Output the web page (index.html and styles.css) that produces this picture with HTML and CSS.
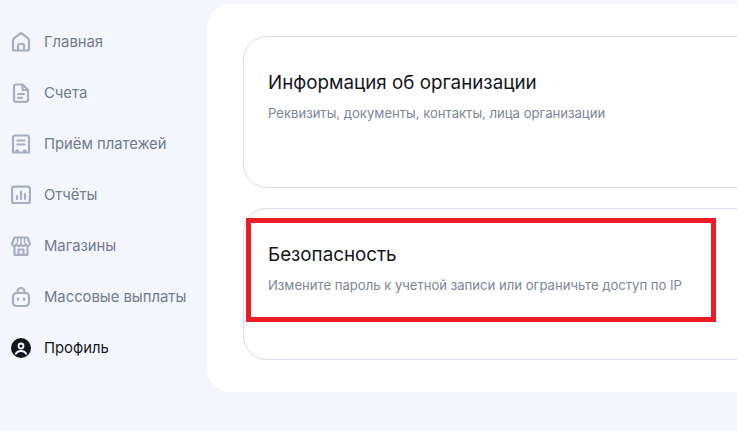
FILE: index.html
```html
<!DOCTYPE html>
<html lang="ru">

<head>
    <meta charset="UTF-8">
    <meta name="viewport" content="width=device-width, initial-scale=1.0">
    <title>Профиль</title>
    <link rel="stylesheet" href="styles.css">
</head>

<body>
    <div class="page">
        <nav class="sidebar">
            <a class="nav-item">
                <svg class="nav-icon" viewBox="0 0 20 20" fill="none" stroke="currentColor" stroke-width="2.2" stroke-linejoin="round">
                    <path d="M2 8.500C2 7.500 2.500 6.800 3.200 6.200L8 2.300a3.200 3.200 0 0 1 4 0l4.800 3.900c.7.600 1.200 1.300 1.200 2.300V17a1.500 1.500 0 0 1-1.500 1.500h-13A1.500 1.500 0 0 1 2 17z" />
                    <path d="M7 18.500V13.500a1.500 1.500 0 0 1 1.500-1.500h3a1.500 1.500 0 0 1 1.500 1.500v5" />
                </svg>
                <span>Главная</span>
            </a>
            <a class="nav-item">
                <svg class="nav-icon" viewBox="0 0 20 20" fill="none" stroke="currentColor" stroke-width="2.200" stroke-linejoin="round" stroke-linecap="round">
                    <path d="M4.500 1.500h7l5.500 5.500v10a1.800 1.800 0 0 1-1.800 1.800H4.800A1.800 1.800 0 0 1 3 17V3a1.500 1.500 0 0 1 1.500-1.500z" />
                    <path d="M11.500 2v5h5" />
                    <path d="M7 11h6M7 14.800h4" />
                </svg>
                <span>Счета</span>
            </a>
            <a class="nav-item">
                <svg class="nav-icon" viewBox="0 0 20 20" fill="none" stroke="currentColor" stroke-width="2.200" stroke-linejoin="round" stroke-linecap="round">
                    <path d="M3.800 1.500h12.400A1.800 1.800 0 0 1 18 3.300v15.200h-3.500v-2h-1.500v2H7v-2H5.500v2H2V3.300a1.800 1.800 0 0 1 1.800-1.800z" />
                    <path d="M6.500 6.500h7M6.500 10.500h7" />
                </svg>
                <span>Приём платежей</span>
            </a>
            <a class="nav-item">
                <svg class="nav-icon" viewBox="0 0 20 20" fill="none" stroke="currentColor" stroke-width="2.200" stroke-linecap="round">
                    <rect x="1.100" y="1.600" width="17.800" height="16.400" rx="1.800" />
                    <path d="M6 14v-3M10 14V6.500M14 14V9" />
                </svg>
                <span>Отчёты</span>
            </a>
            <a class="nav-item">
                <svg class="nav-icon" viewBox="0 0 20 20" fill="none" stroke="currentColor" stroke-width="2.200" stroke-linejoin="round">
                    <path d="M3.500 1.500h13L19 8a2.300 2.300 0 0 1-4.500 0 2.300 2.300 0 0 1-4.500 0 2.300 2.300 0 0 1-4.500 0A2.300 2.300 0 0 1 1 8z" />
                    <path d="M3.500 10.500V18.800h13V10.500" />
                    <path d="M7.500 18.800v-5.300h5v5.300" />
                    <path d="M6.500 2v5M10 2v5M13.500 2v5" stroke-width="1.500" />
                </svg>
                <span>Магазины</span>
            </a>
            <a class="nav-item">
                <svg class="nav-icon" viewBox="0 0 20 20" fill="none" stroke="currentColor" stroke-width="2.200" stroke-linecap="round">
                    <rect x="2" y="6" width="16" height="13" rx="3.500" />
                    <path d="M6.500 6V4.500a3.500 3.500 0 0 1 7 0V6" />
                    <path d="M7 11.500v1.500M13 11.500v1.500" />
                </svg>
                <span>Массовые выплаты</span>
            </a>
            <a class="nav-item active">
                <svg class="nav-icon" viewBox="0 0 20 20">
                    <circle cx="10" cy="10" r="10" fill="currentColor" />
                    <circle cx="10" cy="8" r="2.500" fill="none" stroke="#f4f6fb" stroke-width="1.800" />
                    <path d="M4.500 16.500C5.500 14 7.500 13 10 13s4.500 1 5.500 3.500" fill="none" stroke="#f4f6fb" stroke-width="1.800" />
                </svg>
                <span>Профиль</span>
            </a>
        </nav>

        <main class="panel">
            <section class="card">
                <h2>Информация об организации</h2>
                <p>Реквизиты, документы, контакты, лица организации</p>
            </section>
            <section class="card">
                <h2>Безопасность</h2>
                <p>Измените пароль к учетной записи или ограничьте доступ по IP</p>
                <div class="highlight"></div>
            </section>
        </main>
    </div>
</body>

</html>
```

FILE: styles.css
```css
html,
body {
    height: 100%;
}

body {
    margin: 0;
    overflow: hidden;
    background-color: #f4f6fb;
    font-family: Inter, "Noto Sans", sans-serif;
}

.page {
    display: flex;
    align-items: flex-start;
    width: 100%;
    height: 100%;
    overflow: hidden;
}

.sidebar {
    flex: none;
    width: 207px;
    box-sizing: border-box;
    padding: 16px 0 0 11px;
    display: flex;
    flex-direction: column;
}

.nav-item {
    display: flex;
    align-items: center;
    gap: 13px;
    height: 51px;
    font-size: 14.800px;
    color: #6f7b90;
}

.nav-item.active {
    color: #14161c;
}

.nav-icon {
    flex: none;
    width: 20px;
    height: 20px;
    color: #a6afc1;
}

.active .nav-icon {
    color: #14161c;
}

.panel {
    flex: none;
    width: 700px;
    height: 388px;
    box-sizing: border-box;
    margin-top: 4px;
    padding: 32px 0 0 36px;
    background: #fff;
    border-radius: 24px;
    display: flex;
    flex-direction: column;
    gap: 20px;
}

.card {
    position: relative;
    height: 152px;
    box-sizing: border-box;
    padding: 33px 24px 0;
    border: 1px solid #d5deeb;
    border-radius: 24px;
}

.card h2 {
    margin: 0;
    font-size: 18.800px;
    line-height: 26px;
    font-weight: 400;
    color: #14161c;
}

.card p {
    margin: 8px 0 0;
    font-size: 13.100px;
    line-height: 18px;
    color: #7b869b;
}

.highlight {
    position: absolute;
    left: 2px;
    top: 9px;
    width: 470px;
    height: 104px;
    box-sizing: border-box;
    border: 5px solid #ed1c24;
}
```
